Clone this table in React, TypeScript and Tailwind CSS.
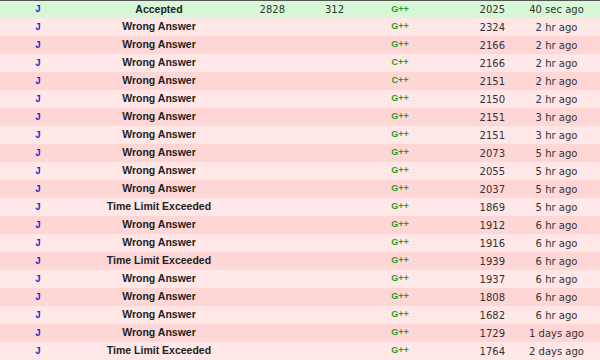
const rows: [string, string, string, string, string, string][] = [
  ["Accepted", "2828", "312", "G++", "2025", "40 sec ago"],
  ["Wrong Answer", "", "", "G++", "2324", "2 hr ago"],
  ["Wrong Answer", "", "", "G++", "2166", "2 hr ago"],
  ["Wrong Answer", "", "", "C++", "2166", "2 hr ago"],
  ["Wrong Answer", "", "", "C++", "2151", "2 hr ago"],
  ["Wrong Answer", "", "", "G++", "2150", "2 hr ago"],
  ["Wrong Answer", "", "", "G++", "2151", "3 hr ago"],
  ["Wrong Answer", "", "", "G++", "2151", "3 hr ago"],
  ["Wrong Answer", "", "", "G++", "2073", "5 hr ago"],
  ["Wrong Answer", "", "", "G++", "2055", "5 hr ago"],
  ["Wrong Answer", "", "", "G++", "2037", "5 hr ago"],
  ["Time Limit Exceeded", "", "", "G++", "1869", "5 hr ago"],
  ["Wrong Answer", "", "", "G++", "1912", "6 hr ago"],
  ["Wrong Answer", "", "", "G++", "1916", "6 hr ago"],
  ["Time Limit Exceeded", "", "", "G++", "1939", "6 hr ago"],
  ["Wrong Answer", "", "", "G++", "1937", "6 hr ago"],
  ["Wrong Answer", "", "", "G++", "1808", "6 hr ago"],
  ["Wrong Answer", "", "", "G++", "1682", "6 hr ago"],
  ["Wrong Answer", "", "", "G++", "1729", "1 days ago"],
  ["Time Limit Exceeded", "", "", "G++", "1764", "2 days ago"],
];

export default function App() {
  return (
    <div className="w-[600px] h-[360px] overflow-hidden bg-white font-['DejaVu_Sans',sans-serif] text-[10px] text-[#333]">
      {rows.map(([status, time, mem, lang, len, ago], i) => {
        const bg =
          i === 0
            ? "bg-[#d7f8d7] border-t border-[#555]"
            : i % 2 === 1
              ? "bg-[#ffe7e7]"
              : "bg-[#ffd6d6]";
        return (
          <div key={i} className={`flex h-[18px] items-center ${bg}`}>
            <div className="w-[76px] text-center font-['Liberation_Mono',monospace] text-[10px] font-bold text-[#2a2ad0]">
              J
            </div>
            <div className="w-[166px] text-center font-['Liberation_Sans',sans-serif] text-[10.5px] font-bold text-[#222]">
              {status}
            </div>
            <div className="w-[47px] pr-[4px] text-right">{time}</div>
            <div className="w-[59px] pr-[4px] text-right">{mem}</div>
            <div className="w-[104px] text-center font-['Liberation_Sans',sans-serif] text-[9px] font-bold text-[#1ea01e]">
              {lang}
            </div>
            <div className="w-[61px] pr-[8px] text-right">{len}</div>
            <div className="w-[87px] text-center">{ago}</div>
          </div>
        );
      })}
    </div>
  );
}
